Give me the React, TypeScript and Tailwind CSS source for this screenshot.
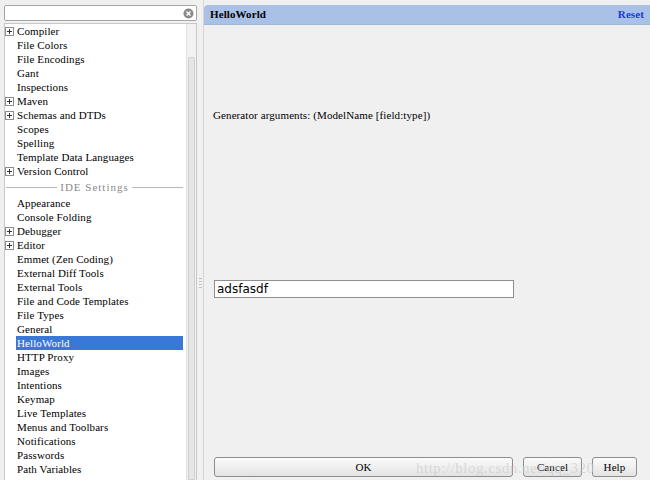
import React from 'react';

type Row = { label: string; plus?: boolean; selected?: boolean; separator?: boolean };

const rows: Row[] = [
  { label: 'Compiler', plus: true },
  { label: 'File Colors' },
  { label: 'File Encodings' },
  { label: 'Gant' },
  { label: 'Inspections' },
  { label: 'Maven', plus: true },
  { label: 'Schemas and DTDs', plus: true },
  { label: 'Scopes' },
  { label: 'Spelling' },
  { label: 'Template Data Languages' },
  { label: 'Version Control', plus: true },
  { label: 'IDE Settings', separator: true },
  { label: 'Appearance' },
  { label: 'Console Folding' },
  { label: 'Debugger', plus: true },
  { label: 'Editor', plus: true },
  { label: 'Emmet (Zen Coding)' },
  { label: 'External Diff Tools' },
  { label: 'External Tools' },
  { label: 'File and Code Templates' },
  { label: 'File Types' },
  { label: 'General' },
  { label: 'HelloWorld', selected: true },
  { label: 'HTTP Proxy' },
  { label: 'Images' },
  { label: 'Intentions' },
  { label: 'Keymap' },
  { label: 'Live Templates' },
  { label: 'Menus and Toolbars' },
  { label: 'Notifications' },
  { label: 'Passwords' },
  { label: 'Path Variables' },
];

const uiFont = { fontFamily: '"Liberation Serif", "Noto Sans CJK SC", serif' };

function PlusBox() {
  return (
    <svg width="9" height="9" viewBox="0 0 9 9" className="shrink-0">
      <rect x="0.5" y="0.5" width="8" height="8" fill="#fff" stroke="#8c8c8c" />
      <path d="M2 4.5h5M4.5 2v5" stroke="#333" strokeWidth="1" />
    </svg>
  );
}

function TreeRow({ row }: { row: Row }) {
  if (row.separator) {
    return (
      <div className="h-[18px] flex items-center pl-px pr-[3px]">
        <div className="flex-1 h-px bg-[#b8b8b8]" />
        <span className="px-[3px] text-[#8a8a8a] tracking-[1px]">{row.label}</span>
        <div className="flex-1 h-px bg-[#b8b8b8]" />
      </div>
    );
  }
  return (
    <div className="h-[14px] flex items-center">
      <div className="w-[11px] flex justify-end pr-[2px] shrink-0">{row.plus && <PlusBox />}</div>
      <div
        className={
          row.selected
            ? 'flex-1 h-[14px] pl-px flex items-center bg-[#3a78d8] text-white mr-[3px]'
            : 'flex-1 pl-px'
        }
      >
        {row.label}
      </div>
    </div>
  );
}

export default function App() {
  return (
    <div
      className="w-[650px] h-[480px] bg-[#f0f0f0] flex overflow-hidden text-[11px] tracking-[0.1px] text-black leading-none"
      style={uiFont}
    >
      {/* left: search + tree */}
      <div className="w-[197px] flex flex-col pl-[4px] pt-[5px] shrink-0">
        <div className="h-[16px] bg-white border border-[#a5a5a5] rounded-[2px] flex items-center justify-end pr-[2px]">
          <svg width="11" height="11" viewBox="0 0 11 11">
            <circle cx="5.5" cy="5.5" r="5" fill="#8a8a8a" />
            <path d="M3.5 3.5l4 4M7.5 3.5l-4 4" stroke="#fff" strokeWidth="1.4" />
          </svg>
        </div>
        <div className="mt-[2px] flex-1 bg-white border border-[#c8c8c8] border-b-0 flex overflow-hidden">
          <div className="flex-1">
            {rows.map(r => (
              <TreeRow key={r.label} row={r} />
            ))}
          </div>
          <div className="w-[10px] bg-[#f2f2f2] border-l border-[#e2e2e2] flex flex-col">
            <div className="h-[33px]" />
            <div className="flex-1 bg-[#e6e6e6] border border-[#cfcfcf] rounded-t-[2px] mx-px" />
          </div>
        </div>
      </div>

      {/* splitter */}
      <div className="w-[7px] shrink-0 flex items-center justify-center border-r border-[#d6d6d6]">
        <div className="flex flex-col gap-[2px] mt-[86px]">
          <div className="w-[3px] h-px bg-[#c4c4c4]" />
          <div className="w-[3px] h-px bg-[#c4c4c4]" />
          <div className="w-[3px] h-px bg-[#c4c4c4]" />
          <div className="w-[3px] h-px bg-[#c4c4c4]" />
        </div>
      </div>

      {/* right panel */}
      <div className="flex-1 flex flex-col pt-[5px] relative">
        <div className="h-[20px] bg-[#a9c1e6] rounded-tl-[4px] flex items-center justify-between pl-[6px] pr-[6px] border-b border-[#9fb6da]">
          <span className="font-bold">HelloWorld</span>
          <span className="font-bold text-[#1a3ad8]">Reset</span>
        </div>
        <div className="flex-1 flex flex-col pl-[10px] pr-[135px]">
          <div className="mt-[85px] -ml-px">Generator arguments: (ModelName [field:type])</div>
          <input
            readOnly
            value="adsfasdf"
            className="mt-[159px] h-[18px] w-[300px] bg-white border border-[#8f8f8f] px-[2px] text-[12px] tracking-normal text-black outline-none"
            style={{ fontFamily: '"DejaVu Sans", "Liberation Sans", sans-serif' }}
          />
          <div className="flex-1" />
        </div>
        <div className="flex items-center pl-[10px] pb-[3px] gap-[10px]">
          <button className="w-[299px] h-[20px] border border-[#8e8e8e] rounded-[3px] bg-gradient-to-b from-[#fbfbfb] to-[#e3e3e3]">OK</button>
          <button className="w-[59px] h-[20px] border border-[#8e8e8e] rounded-[3px] bg-gradient-to-b from-[#fbfbfb] to-[#e3e3e3]">Cancel</button>
          <button className="w-[45px] h-[20px] border border-[#8e8e8e] rounded-[3px] bg-gradient-to-b from-[#fbfbfb] to-[#e3e3e3]">Help</button>
        </div>
        <span className="absolute left-[212px] bottom-[4px] text-[15px] text-[#cdcdcd]/70 tracking-[0.5px] pointer-events-none">
          http://blog.csdn.net/qq_320
        </span>
      </div>
    </div>
  );
}
